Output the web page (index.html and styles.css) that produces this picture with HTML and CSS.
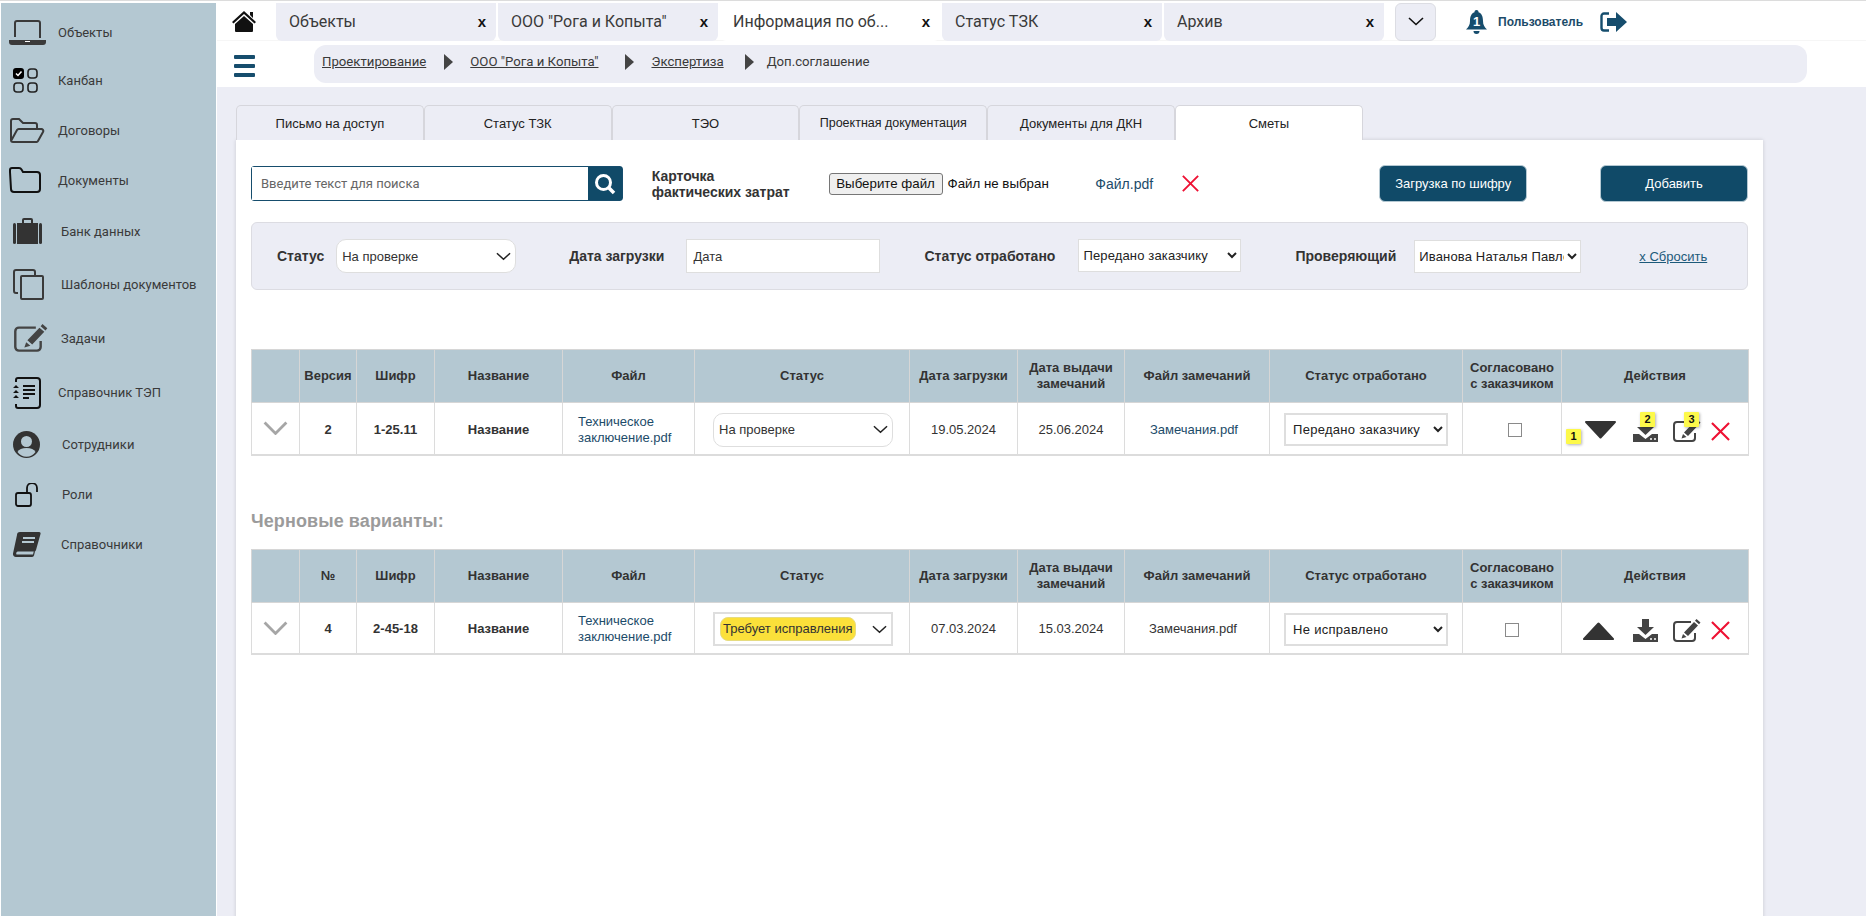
FILE: index.html

```html
<!DOCTYPE html>
<html lang="ru">
<head>
    <meta charset="utf-8">
    <title>Сметы</title>
    <link rel="stylesheet" href="styles.css">
</head>
<body>
    <!-- общие иконки -->
    <svg class="defs" width="0" height="0">
        <symbol id="ic-chevron" viewBox="0 0 16 9"><path d="M1 1l7 6.5L15 1" fill="none" stroke="currentColor" stroke-width="1.6"/></symbol>
        <symbol id="ic-close" viewBox="0 0 20 20"><path d="M1 1l18 18M19 1L1 19" fill="none" stroke="#ee1133" stroke-width="2.2"/></symbol>
        <symbol id="ic-download" viewBox="0 0 25 23"><path d="M9 0h7v8h5l-8.5 8L4 8h5z" fill="#444"/><path d="M0 15h6l6.5 5 6.5-5h6v8H0z" fill="#444"/><circle cx="18" cy="20" r="1" fill="#fff"/><circle cx="22" cy="20" r="1" fill="#fff"/></symbol>
        <symbol id="ic-edit" viewBox="0 0 28 24"><path d="M22 14v5a3 3 0 0 1-3 3H4a3 3 0 0 1-3-3V6a3 3 0 0 1 3-3h14" fill="none" stroke="#444" stroke-width="2"/><path d="M23.5 0l4 3.5-1.5 1.8-4-3.5zM21 3l4 3.5-10 10.5-4-3.5zM10 15l3.5 3-5 1.5z" fill="#444"/></symbol>
        <symbol id="ic-tri-down" viewBox="0 0 31 18"><path d="M1 0h29a1 1 0 0 1 .7 1.7L16.5 17a1.4 1.4 0 0 1-2 0L.3 1.7A1 1 0 0 1 1 0z" fill="#333"/></symbol>
        <symbol id="ic-tri-up" viewBox="0 0 31 18"><path d="M1 18h29a1 1 0 0 0 .7-1.7L16.5 1a1.4 1.4 0 0 0-2 0L.3 16.3A1 1 0 0 0 1 18z" fill="#333"/></symbol>
        <symbol id="ic-arrow" viewBox="0 0 9 16"><path d="M0 0l9 8-9 8z" fill="#444"/></symbol>
    </svg>

    <aside class="sidebar">
        <a class="nav-item">
            <svg width="37" height="25" viewBox="0 0 37 25"><path d="M6 17V3a2 2 0 0 1 2-2h21a2 2 0 0 1 2 2v15" fill="none" stroke="#3a3a3a" stroke-width="2"/><path d="M0 20h37v2a3 3 0 0 1-3 3H3a3 3 0 0 1-3-3z" fill="#3a3a3a"/><path d="M16 21h5v1h-5z" fill="#fff"/></svg>
            <span>Объекты</span>
        </a>
        <a class="nav-item">
            <svg class="nav-icon-in" width="25" height="25" viewBox="0 0 25 25"><rect x="0" y="0" width="11" height="11" rx="3" fill="#000"/><path d="M3 5.5l2 2 3.5-4" fill="none" stroke="#fff" stroke-width="1.5"/><rect x="15" y="1" width="9" height="9" rx="3" fill="none" stroke="#222" stroke-width="1.6"/><rect x="1" y="15" width="9" height="9" rx="3" fill="none" stroke="#222" stroke-width="1.6"/><rect x="15" y="15" width="9" height="9" rx="3" fill="none" stroke="#222" stroke-width="1.6"/></svg>
            <span>Канбан</span>
        </a>
        <a class="nav-item">
            <svg width="36" height="25" viewBox="0 0 36 25"><path d="M2 22V3a2 2 0 0 1 2-2h6l4 4h12a2 2 0 0 1 2 2v3M2 23l6-11a2 2 0 0 1 2-1h22a2 2 0 0 1 2 3l-5 9a2 2 0 0 1-2 1H4a2 2 0 0 1-2-2" fill="none" stroke="#3a3a3a" stroke-width="2"/></svg>
            <span>Договоры</span>
        </a>
        <a class="nav-item">
            <svg width="32" height="26" viewBox="0 0 32 26"><path d="M1 5V3a2 2 0 0 1 2-2h7a3 3 0 0 1 2.5 1.5L14 5h14a3 3 0 0 1 3 3v14a3 3 0 0 1-3 3H5a3 3 0 0 1-3-3z" fill="none" stroke="#111" stroke-width="2"/></svg>
            <span>Документы</span>
        </a>
        <a class="nav-item nav-item-wide">
            <svg class="nav-icon-in" width="29" height="26" viewBox="0 0 29 26"><path d="M9 6V2a2 2 0 0 1 2-2h7a2 2 0 0 1 2 2v4h-2V2h-7v4z" fill="#333"/><rect x="0" y="5" width="3" height="21" rx="1.5" fill="#333"/><rect x="4" y="5" width="21" height="21" fill="#333"/><rect x="26" y="5" width="3" height="21" rx="1.5" fill="#333"/></svg>
            <span>Банк данных</span>
        </a>
        <a class="nav-item nav-item-wide">
            <svg class="nav-icon-in" width="31" height="31" viewBox="0 0 31 31"><path d="M5 24H3a2 2 0 0 1-2-2V3a2 2 0 0 1 2-2h17a2 2 0 0 1 2 2v3" fill="none" stroke="#3a3a3a" stroke-width="2"/><rect x="8" y="7" width="22" height="23" rx="1" fill="none" stroke="#3a3a3a" stroke-width="2"/></svg>
            <span>Шаблоны документов</span>
        </a>
        <a class="nav-item nav-item-wide">
            <svg class="nav-icon-in" width="36" height="29" viewBox="0 0 28 24"><use href="#ic-edit"/></svg>
            <span>Задачи</span>
        </a>
        <a class="nav-item">
            <svg class="nav-icon-in" width="28" height="32" viewBox="0 0 28 32"><path d="M3 5V3a2 2 0 0 1 2-2h19a3 3 0 0 1 3 3v24a3 3 0 0 1-3 3H5a2 2 0 0 1-2-2v-2" fill="none" stroke="#111" stroke-width="2"/><path d="M10 8h12v2H10zM10 12h12v2H10zM10 16h12v2H10zM10 20h6v2h-6z" fill="#111"/><path d="M0 11h6l-3-3zM0 16h6l-3-3zM0 21h6l-3-3z" fill="#111"/></svg>
            <span>Справочник ТЭП</span>
        </a>
        <a class="nav-item nav-item-wider">
            <svg class="nav-icon-in" width="27" height="27" viewBox="0 0 27 27"><circle cx="13.5" cy="13.5" r="13.5" fill="#333"/><circle cx="13.5" cy="10.5" r="5.5" fill="#b4c8d2"/><path d="M4.5 21a9.5 6 0 0 1 18 0 11 11 0 0 1-18 0z" fill="#b4c8d2"/></svg>
            <span>Сотрудники</span>
        </a>
        <a class="nav-item nav-item-wider">
            <svg class="nav-icon-lock" width="23" height="24" viewBox="0 0 23 24"><rect x="1" y="10" width="15" height="13" rx="2" fill="none" stroke="#111" stroke-width="1.8"/><path d="M12 10V5a5 5 0 0 1 10 0v4" fill="none" stroke="#111" stroke-width="1.8"/></svg>
            <span>Роли</span>
        </a>
        <a class="nav-item nav-item-wide">
            <svg class="nav-icon-in" width="29" height="25" viewBox="0 0 29 25"><path d="M7 0h19a1.5 1.5 0 0 1 1.5 2L23 18a2 2 0 0 1-2 1.5H5a2 2 0 0 0-1.5 3H20l4-16 1 1-4 16a2 2 0 0 1-2 1.5H3a3 3 0 0 1-3-3.5L4 3a3 3 0 0 1 3-3z" fill="#333"/><path d="M10 5h12v2H10zM9 9h12v2H9z" fill="#b4c8d2"/></svg>
            <span>Справочники</span>
        </a>
    </aside>

    <div class="page">
        <header class="topbar">
            <div class="tabs-row">
                <svg class="home" width="24" height="21" viewBox="0 0 24 21"><path d="M12 0l12 11-1.5 1.5L12 3 1.5 12.5 0 11z" fill="#111"/><path d="M3 13l9-8 9 8v7a1 1 0 0 1-1 1H4a1 1 0 0 1-1-1zM18 1h3v6l-3-3z" fill="#111"/></svg>
                <div class="doc-tab"><span>Объекты</span><b class="doc-x">x</b></div>
                <div class="doc-tab"><span>ООО "Рога и Копыта"</span><b class="doc-x">x</b></div>
                <div class="doc-tab active"><span>Информация по об...</span><b class="doc-x">x</b></div>
                <div class="doc-tab"><span>Статус ТЗК</span><b class="doc-x">x</b></div>
                <div class="doc-tab"><span>Архив</span><b class="doc-x">x</b></div>
                <button class="more-tabs"><svg width="22" height="9"><use href="#ic-chevron"/></svg></button>
                <svg class="bell" width="21" height="24" viewBox="0 0 21 24"><path d="M10.5 0a2 2 0 0 1 2 2.2C16 3.5 17 7 17 11c0 4 1.5 6 4 8.5H0C2.5 17 4 15 4 11c0-4 1-7.5 4.5-8.8A2 2 0 0 1 10.5 0z" fill="#164d6d"/><path d="M7.5 21h6a3 3 0 0 1-6 0z" fill="#164d6d"/><text x="10.5" y="16" class="bell-num">1</text></svg>
                <span class="user-name">Пользователь</span>
                <svg class="logout" width="27" height="20" viewBox="0 0 27 20"><path d="M9 1.5H4A2.5 2.5 0 0 0 1.5 4v12A2.5 2.5 0 0 0 4 18.5h5" fill="none" stroke="#164d6d" stroke-width="2.4"/><path d="M7 6h9V0l11 10-11 10v-6H7z" fill="#164d6d"/></svg>
            </div>
            <div class="crumbs-row">
                <div class="burger"><i></i><i></i><i></i></div>
                <nav class="crumbs">
                    <a>Проектирование</a>
                    <svg class="crumb-arrow-1" width="9" height="16"><use href="#ic-arrow"/></svg>
                    <a>ООО "Рога и Копыта"</a>
                    <svg class="crumb-arrow-2" width="9" height="16"><use href="#ic-arrow"/></svg>
                    <a>Экспертиза</a>
                    <svg class="crumb-arrow-3" width="9" height="16"><use href="#ic-arrow"/></svg>
                    <span>Доп.соглашение</span>
                </nav>
            </div>
        </header>

        <main class="content">
            <div class="sub-tabs">
                <div class="sub-tab">Письмо на доступ</div>
                <div class="sub-tab">Статус ТЗК</div>
                <div class="sub-tab">ТЭО</div>
                <div class="sub-tab sub-tab-small">Проектная документация</div>
                <div class="sub-tab">Документы для ДКН</div>
                <div class="sub-tab active">Сметы</div>
            </div>

            <section class="card">
                <div class="tools">
                    <div class="search">
                        <input class="search-input" placeholder="Введите текст для поиска">
                        <button class="search-btn"><svg width="22" height="22" viewBox="0 0 22 22"><circle cx="9.5" cy="9.5" r="7" fill="none" stroke="#fff" stroke-width="3"/><path d="M14.5 14.5l5.5 5.5" stroke="#fff" stroke-width="3.5"/></svg></button>
                    </div>
                    <div class="cost-label">Карточка<br>фактических затрат</div>
                    <div class="file-pick">
                        <button class="file-btn">Выберите файл</button>
                        <span>Файл не выбран</span>
                    </div>
                    <a class="file-name">Файл.pdf</a>
                    <svg class="file-del" width="17" height="17"><use href="#ic-close"/></svg>
                    <button class="btn btn-code">Загрузка по шифру</button>
                    <button class="btn btn-add">Добавить</button>
                </div>

                <div class="filters">
                    <label class="f-label">Статус</label>
                    <div class="pick pick-round f-status">На проверке<svg width="15" height="9"><use href="#ic-chevron"/></svg></div>
                    <label class="f-label f-date-label">Дата загрузки</label>
                    <input class="f-date" value="Дата">
                    <label class="f-label f-worked-label">Статус отработано</label>
                    <select class="f-select f-worked"><option>Передано заказчику</option></select>
                    <label class="f-label f-check-label">Проверяющий</label>
                    <select class="f-select f-check"><option>Иванова Наталья Павловна</option></select>
                    <a class="reset">х Сбросить</a>
                </div>

                <table class="grid grid-main">
                    <colgroup>
                        <col class="c-arrow"><col class="c-num"><col class="c-code"><col class="c-name"><col class="c-file"><col class="c-status"><col class="c-date"><col class="c-date2"><col class="c-notes"><col class="c-worked"><col class="c-agreed"><col class="c-actions">
                    </colgroup>
                    <tr>
                        <th></th><th>Версия</th><th>Шифр</th><th>Название</th><th>Файл</th><th>Статус</th><th>Дата загрузки</th><th>Дата выдачи<br>замечаний</th><th>Файл замечаний</th><th>Статус отработано</th><th>Согласовано<br>с заказчиком</th><th>Действия</th>
                    </tr>
                    <tr>
                        <td><svg class="row-arrow" width="25" height="14" viewBox="0 0 16 9"><path d="M1 1l7 7 7-7" fill="none" stroke="#a6a6a6" stroke-width="1.8"/></svg></td>
                        <td class="strong">2</td>
                        <td class="strong">1-25.11</td>
                        <td class="strong">Название</td>
                        <td class="link left">Техническое<br>заключение.pdf</td>
                        <td><div class="pick pick-round">На проверке<svg width="15" height="9"><use href="#ic-chevron"/></svg></div></td>
                        <td>19.05.2024</td>
                        <td>25.06.2024</td>
                        <td class="link notes">Замечания.pdf</td>
                        <td><select class="row-select"><option>Передано заказчику</option></select></td>
                        <td><span class="check"></span></td>
                        <td>
                            <div class="actions">
                                <span class="act act-tri-down"><svg width="31" height="18"><use href="#ic-tri-down"/></svg><em class="hint hint-1">1</em></span>
                                <span class="act act-load"><svg width="25" height="23"><use href="#ic-download"/></svg><em class="hint hint-2">2</em></span>
                                <span class="act act-edit"><svg width="28" height="24"><use href="#ic-edit"/></svg><em class="hint hint-3">3</em></span>
                                <svg width="21" height="19"><use href="#ic-close"/></svg>
                            </div>
                        </td>
                    </tr>
                </table>

                <h3 class="drafts">Черновые варианты:</h3>

                <table class="grid">
                    <colgroup>
                        <col class="c-arrow"><col class="c-num"><col class="c-code"><col class="c-name"><col class="c-file"><col class="c-status"><col class="c-date"><col class="c-date2"><col class="c-notes"><col class="c-worked"><col class="c-agreed"><col class="c-actions">
                    </colgroup>
                    <tr>
                        <th></th><th>№</th><th>Шифр</th><th>Название</th><th>Файл</th><th>Статус</th><th>Дата загрузки</th><th>Дата выдачи<br>замечаний</th><th>Файл замечаний</th><th>Статус отработано</th><th>Согласовано<br>с заказчиком</th><th>Действия</th>
                    </tr>
                    <tr>
                        <td><svg class="row-arrow" width="25" height="14" viewBox="0 0 16 9"><path d="M1 1l7 7 7-7" fill="none" stroke="#a6a6a6" stroke-width="1.8"/></svg></td>
                        <td class="strong">4</td>
                        <td class="strong">2-45-18</td>
                        <td class="strong">Название</td>
                        <td class="link left">Техническое<br>заключение.pdf</td>
                        <td><div class="pick pick-flat"><span class="pill">Требует исправления</span><svg width="15" height="9"><use href="#ic-chevron"/></svg></div></td>
                        <td>07.03.2024</td>
                        <td>15.03.2024</td>
                        <td class="notes notes-plain">Замечания.pdf</td>
                        <td><select class="row-select"><option>Не исправлено</option></select></td>
                        <td><span class="check check-shift"></span></td>
                        <td>
                            <div class="actions">
                                <span class="act act-tri-up"><svg width="31" height="18"><use href="#ic-tri-up"/></svg></span>
                                <span class="act act-load"><svg width="25" height="23"><use href="#ic-download"/></svg></span>
                                <span class="act act-edit"><svg width="28" height="24"><use href="#ic-edit"/></svg></span>
                                <svg width="21" height="19"><use href="#ic-close"/></svg>
                            </div>
                        </td>
                    </tr>
                </table>
            </section>
        </main>
    </div>
</body>
</html>
```

FILE: styles.css

```css
* {
    box-sizing: border-box;
}

body {
    margin: 0;
    display: flex;
    height: 916px;
    overflow: hidden;
    padding-top: 2px;
    background: #fff;
    border-top: 1px solid #dcdcdc;
    font-family: "Liberation Sans", Arial, sans-serif;
    font-size: 13px;
    color: #333;
}

.defs {
    position: absolute;
}

/* левое меню */
.sidebar {
    width: 215px;
    margin-left: 1px;
    flex-shrink: 0;
    background: #b4c8d2;
    display: grid;
    align-content: start;
    grid-template-rows: 47px 49px 50px 50px 52px 54px 55px 53px 51px 49px 50px;
    padding-top: 6px;
    font-family: Roboto, sans-serif;
    font-size: 13px;
    color: #3a3a3a;
}

.nav-item {
    display: grid;
    grid-template-columns: 49px 1fr;
    align-items: center;
    padding-left: 8px;
}

.nav-item-wide {
    grid-template-columns: 52px 1fr;
}

.nav-item-wider {
    grid-template-columns: 53px 1fr;
}

.nav-icon-in {
    margin-left: 4px;
}

.nav-icon-lock {
    margin-left: 6px;
}

/* верхняя часть */
.page {
    flex: 1;
    min-width: 0;
    margin-left: 1px;
    display: flex;
    flex-direction: column;
}

.topbar {
    background: #fff;
    height: 84px;
    flex-shrink: 0;
}

.tabs-row {
    display: flex;
    align-items: center;
    height: 38px;
    padding-left: 15px;
    border-bottom: 1px solid #f6f6f6;
}

.home {
    margin-right: 20px;
}

.doc-tab {
    width: 220px;
    height: 38px;
    margin-right: 2px;
    padding: 0 10px 0 13px;
    display: flex;
    align-items: center;
    justify-content: space-between;
    background: #ecedf5;
    border-radius: 0 0 6px 6px;
    font-family: Roboto, sans-serif;
    font-size: 16px;
    color: #3a3a3a;
}

.doc-tab.active {
    background: #fff;
}

.doc-x {
    font-family: "Liberation Sans", sans-serif;
    font-size: 15px;
    color: #111;
}

.more-tabs {
    width: 41px;
    height: 38px;
    margin-left: 9px;
    padding: 0;
    display: flex;
    align-items: center;
    justify-content: center;
    background: #ecedf5;
    border: 1px solid #dcdde3;
    border-radius: 6px;
    color: #111;
}

.bell {
    margin-left: 30px;
}

.bell-num {
    font-family: "Liberation Sans", sans-serif;
    font-size: 13px;
    font-weight: bold;
    fill: #fff;
    text-anchor: middle;
}

.user-name {
    margin-left: 11px;
    font-size: 12px;
    font-weight: bold;
    color: #1c4b69;
}

.logout {
    margin-left: 17px;
}

.crumbs-row {
    display: flex;
    padding-top: 4px;
}

.burger {
    width: 97px;
    padding: 10px 0 0 17px;
}

.burger i {
    display: block;
    width: 21px;
    height: 4px;
    margin-bottom: 5px;
    background: #164d6d;
    border-radius: 1px;
}

.crumbs {
    width: 1493px;
    height: 38px;
    padding: 9px 0 0 8px;
    display: flex;
    align-items: flex-start;
    background: #ecedf5;
    border-radius: 12px;
    font-family: Roboto, sans-serif;
    font-size: 13.2px;
    color: #3a3a3a;
}

.crumbs a {
    text-decoration: underline;
}

.crumb-arrow-1 {
    margin: 0 17px 0 18px;
}

.crumb-arrow-2 {
    margin: 0 17px 0 27px;
}

.crumb-arrow-3 {
    margin: 0 13px 0 21px;
}

/* основная часть */
.content {
    flex: 1;
    min-height: 0;
    padding: 18px 103px 0 19px;
    background: #ecedf5;
}

.sub-tabs {
    display: flex;
    height: 35px;
}

.sub-tab {
    width: 187.8px;
    display: flex;
    align-items: center;
    justify-content: center;
    background: #ecedf5;
    border: 1px solid #d6d6dc;
    border-bottom: 0;
    border-radius: 5px 5px 0 0;
    color: #222;
}

.sub-tab-small {
    font-size: 12.5px;
}

.sub-tab.active {
    background: #fff;
}

.card {
    height: 800px;
    padding: 25px 15px 0;
    background: #fff;
    box-shadow: 0 0 4px rgba(0, 0, 0, 0.15);
}

.tools {
    display: flex;
    align-items: center;
    height: 37px;
}

.search {
    display: flex;
    width: 372px;
    height: 35px;
    border: 1px solid #164d6d;
    border-radius: 3px;
}

.search-input {
    flex: 1;
    min-width: 0;
    padding: 0 9px;
    border: 0;
    outline: none;
    font: 13px Roboto, sans-serif;
}

.search-input::placeholder {
    color: #666;
}

.search-btn {
    width: 34px;
    padding: 0;
    display: flex;
    align-items: center;
    justify-content: center;
    background: #104a68;
    border: 0;
}

.cost-label {
    width: 177px;
    margin-left: 29px;
    font-size: 14px;
    font-weight: bold;
    line-height: 16px;
    color: #333;
}

.file-pick {
    display: flex;
    align-items: center;
    gap: 5px;
    width: 267px;
    font-size: 13.3px;
    color: #111;
}

.file-btn {
    width: 114px;
    height: 22px;
    padding: 0;
    font: 13.3px "Liberation Sans", sans-serif;
    background: #efefef;
    border: 1px solid #767676;
    border-radius: 3px;
    color: #111;
}

.file-name {
    width: 87px;
    font-size: 14px;
    color: #1c4b69;
}

.btn {
    height: 37px;
    width: 148px;
    padding: 0;
    background: #104a68;
    border: 1px solid #b4c8d2;
    border-radius: 6px;
    font: 13px "Liberation Sans", sans-serif;
    color: #fff;
}

.btn-code {
    margin-left: 180px;
}

.btn-add {
    margin-left: 73px;
}

.filters {
    display: flex;
    align-items: center;
    height: 68px;
    margin-top: 20px;
    padding-left: 25px;
    background: #ecedf5;
    border: 1px solid #dcdce2;
    border-radius: 6px;
}

.f-label {
    font-size: 14px;
    font-weight: bold;
    color: #333;
}

.f-status {
    width: 180px;
    margin-left: 12px;
}

.f-date-label {
    margin-left: 53px;
}

.f-date {
    width: 194px;
    height: 34px;
    margin-left: 22px;
    padding: 0 6px;
    border: 1px solid #dedede;
    font: 13px "Liberation Sans", sans-serif;
    color: #333;
}

.f-worked-label {
    margin-left: 44px;
}

.f-select {
    height: 33px;
    background: #fff;
    border: 1px solid #dedede;
    font: 13px "Liberation Sans", sans-serif;
    letter-spacing: 0.15px;
    color: #222;
}

.f-worked {
    width: 163px;
    margin: 0 0 2px 23px;
}

.f-check-label {
    margin-left: 54px;
}

.f-check {
    width: 167px;
    margin-left: 18px;
}

.reset {
    margin-left: 58px;
    text-decoration: underline;
    color: #1c5a7a;
}

/* таблицы */
.grid {
    width: 1497px;
    table-layout: fixed;
    border-collapse: collapse;
}

.grid-main {
    margin-top: 59px;
}

.c-arrow { width: 48px; }
.c-num { width: 57px; }
.c-code { width: 78px; }
.c-name { width: 128px; }
.c-file { width: 132px; }
.c-status { width: 215px; }
.c-date { width: 108px; }
.c-date2 { width: 107px; }
.c-notes { width: 145px; }
.c-worked { width: 193px; }
.c-agreed { width: 99px; }
.c-actions { width: 187px; }

.grid th {
    height: 53px;
    padding: 0;
    background: #b4c8d2;
    border: 1px solid #d6d6d6;
    font-size: 13px;
    line-height: 16px;
    color: #333;
}

.grid td {
    height: 52px;
    padding: 3px 0 0;
    border: 1px solid #dcdcdc;
    border-bottom-width: 2px;
    text-align: center;
    line-height: 16px;
    color: #333;
}

.grid .strong {
    font-weight: bold;
}

.grid .link {
    color: #1c4b69;
}

.grid .left {
    text-align: left;
    padding-left: 15px;
}

.grid .notes {
    padding-right: 6px;
}

.grid .notes-plain {
    padding-right: 8px;
}

.row-arrow {
    display: block;
    margin: -3px auto 0;
}

.pick {
    display: flex;
    align-items: center;
    justify-content: space-between;
    height: 34px;
    padding: 0 4px 0 5px;
    background: #fff;
    color: #333;
}

.pick svg {
    color: #222;
}

.pick-round {
    border: 1px solid #dedede;
    border-radius: 10px;
}

.grid .pick {
    width: 180px;
    margin-left: 18px;
}

.pick-flat {
    border: 2px solid #dedede;
}

.pill {
    padding: 3px 2px;
    background: #fbe03a;
    border: 1px solid #e6dc80;
    border-radius: 8px;
    color: #333;
    white-space: nowrap;
}

.row-select {
    width: 164px;
    height: 33px;
    padding-left: 3px;
    background: #fff;
    border: 2px solid #dedede;
    font: 13px "Liberation Sans", sans-serif;
    letter-spacing: 0.3px;
    color: #222;
}

.check {
    display: inline-block;
    width: 14px;
    height: 14px;
    margin-left: 6px;
    vertical-align: middle;
    background: #fff;
    border: 1px solid #8a8a8a;
}

.grid .check-shift {
    margin-left: 0;
}

.actions {
    display: flex;
    align-items: center;
    height: 45px;
    padding: 3px 0 0 20px;
}

.act {
    position: relative;
    display: block;
    height: 24px;
}

.act svg {
    display: block;
}

.act-tri-down {
    width: 31px;
    margin-left: 3px;
    margin-right: 17px;
    padding-top: 2px;
}

.act-tri-up {
    width: 31px;
    margin-left: 1px;
    margin-right: 19px;
    padding-top: 3px;
}

.act-load {
    width: 25px;
    margin-right: 15px;
}

.act-edit {
    width: 28px;
    margin-right: 9px;
}

.hint {
    position: absolute;
    width: 15px;
    height: 15px;
    background: #fdf94a;
    border-radius: 1px;
    box-shadow: 1px 1px 3px rgba(0, 0, 0, 0.3);
    font-size: 11px;
    font-style: normal;
    font-weight: bold;
    line-height: 15px;
    text-align: center;
    color: #111;
}

.hint-1 {
    left: -19px;
    top: 10px;
}

.hint-2 {
    left: 7px;
    top: -7px;
}

.hint-3 {
    left: 11px;
    top: -7px;
}

.drafts {
    margin: 55px 0 17px;
    font-size: 18px;
    line-height: 21px;
    letter-spacing: 0.1px;
    color: #9b9b9b;
}
```
